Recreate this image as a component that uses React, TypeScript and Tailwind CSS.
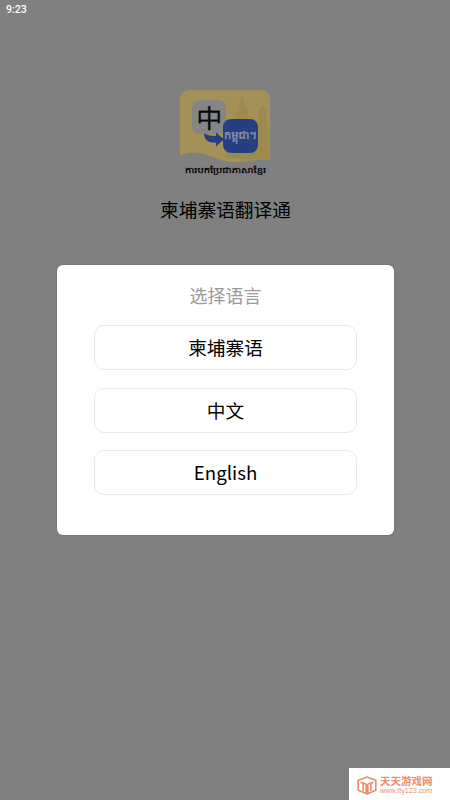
import { FunctionComponent } from "react";

const languages = [
  { id: 'km', label: "柬埔寨语" },
  { id: 'zh', label: "中文" },
  { id: 'en', label: "English" },
];

function StatusBar() {
  return (
    <div className="h-5 pl-1.5 pt-[3px] font-[Roboto,sans-serif] text-[10.5px] leading-[14px] font-medium text-white">
      9:23
    </div>
  );
}

const AppLogo: FunctionComponent = () => (
  <svg className="ml-0.5" width="92" height="90" viewBox="0 0 92 90" textRendering="geometricPrecision">
    <path d="M0 10Q0 0 10 0H80Q90 0 90 10V70C78 68 66 73 52 72C38 71 28 63 14 62.5C8 62.5 4 64 0 65.5Z" fill="#a49158" />
    {/* temple towers */}
    <g fill="#93803f" opacity="0.45">
      <path d="M51 68V43L55 34V24L59 21L60 12L61 6L63 6L64 12L68 20V32L72 39V70Z" />
      <path d="M72 69V36L77 31L79 20L83 15L86 21L87 34L89 40V69Z" />
      <path d="M46 68V39L49 31L52 39V68Z" />
    </g>
    <g stroke="#b09c59" strokeWidth="0.8" opacity="0.4">
      <path d="M57 24V38M61 19V36M65 22V39M79 24V66M83 20V67M87 36V67M56 25H68M54 33H70" />
    </g>
    <rect x="12" y="10" width="34" height="34" rx="8" fill="#858585" />
    <rect x="43" y="29" width="35" height="34" rx="8" fill="#253f82" />
    <path d="M24 43.5Q29 46 36 46V42.5L44 49.3L36 56.5V52.7C29 53 24 50 24 43.5Z" fill="#253f82" />
    <text x="29.3" y="38" textAnchor="middle" fontSize="26" fontFamily="Noto Sans CJK SC, sans-serif" fill="#080808" stroke="#080808" strokeWidth="0.2">中</text>
    <text x="44" y="49" textLength="33" lengthAdjust="spacingAndGlyphs" fontSize="11" fontWeight="700" fontFamily="Noto Sans, sans-serif" fill="#8d8da8">កម្ពុជា។</text>
    <text x="5" y="82.5" textLength="81" lengthAdjust="spacingAndGlyphs" fontSize="8" fontWeight="600" fontFamily="Noto Sans, sans-serif" fill="#090909">ការបកប្រែជាភាសាខ្មែរ</text>
  </svg>
);

function LanguageDialog() {
  return (
    <section className="mx-auto h-[270px] w-[337px] rounded-md bg-white px-[37px] pt-[17px] shadow-[0_0_2px_#666]">
      <h2 className="h-[27px] pl-px text-center text-[18px] leading-[27px] font-normal text-[#999]">选择语言</h2>
      <div className="mt-4 flex flex-col gap-[17.5px]">
        {languages.map(({ id, label }) => (
          <button key={id} className="h-[45px] w-full rounded-[10px] border border-[#e9e9e9] pl-px text-[18.7px] text-black">
            {label}
          </button>
        ))}
      </div>
    </section>
  );
}

function SiteMark() {
  return (
    <div className="ml-auto flex h-8 w-[101px] items-center bg-white pl-2 pt-0.5 text-[#e98e73]">
      <svg width="20" height="19" viewBox="0 0 20 19" fill="none" stroke="currentColor" strokeWidth="1.7" strokeLinejoin="round">
        <path d="M10 1L18.8 4.3V14.2L10 18L1.2 14.2V4.3Z" />
        <path d="M3.5 6.4L9.2 8M16.5 6.4L10.8 8M6.2 7V15M9.2 8V17M10.8 8V17M13.8 7V15" />
      </svg>
      <div className="ml-[3px]">
        <div className="h-3 text-[10.5px] leading-3 font-bold">天天游戏网</div>
        <div className="h-2 text-[7.2px] leading-2 font-['Liberation_Sans',sans-serif]">www.tty123.com</div>
      </div>
    </div>
  );
}

export default function App() {
  return (
    <main className="flex h-[800px] w-[450px] flex-col overflow-hidden bg-[#808080] font-['Noto_Sans_CJK_SC',sans-serif]">
      <StatusBar />
      <header className="flex h-[245px] flex-col items-center pt-[70px]">
        <AppLogo />
        <h1 className="mt-[15px] pl-px text-[18.7px] leading-7 font-normal text-black">柬埔寨语翻译通</h1>
      </header>
      <LanguageDialog />
      <footer className="mt-auto">
        <SiteMark />
      </footer>
    </main>
  );
}
